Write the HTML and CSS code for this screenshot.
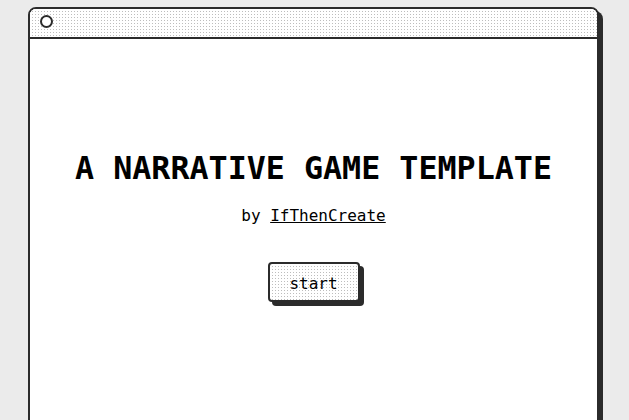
FILE: index.html
```html
<!DOCTYPE html>
<html>
<head>
<meta charset="utf-8">
<link rel="stylesheet" href="styles.css">
</head>
<body>
<div class="window">
  <div class="titlebar"><span class="dot-btn"></span></div>
  <div class="content">
    <h1 class="title">A NARRATIVE GAME TEMPLATE</h1>
    <p class="byline">by <a class="author" href="#">IfThenCreate</a></p>
    <button class="start">start</button>
  </div>
</div>
</body>
</html>
```
FILE: styles.css
```css
html, body {
  margin: 0;
  padding: 0;
}
body {
  background: #ebebeb;
  font-family: "DejaVu Sans Mono", "Liberation Mono", monospace;
  color: #000;
  overflow: hidden;
  height: 420px;
}
.window {
  box-sizing: border-box;
  margin: 7px 0 0 28px;
  width: 571px;
  height: 520px;
  background: #fff;
  border: 2px solid #2b2b2b;
  border-radius: 8px 8px 0 0;
  box-shadow: 4px 4px 0 #2b2b2b;
}
.titlebar {
  height: 28px;
  border-bottom: 2px solid #2b2b2b;
  border-radius: 6px 6px 0 0;
  background-color: #bdbdbd;
  background-image:
    linear-gradient(to right, #fff 2px, transparent 2px),
    linear-gradient(to bottom, #fff 2px, transparent 2px);
  background-size: 3px 3px;
  display: flex;
  align-items: flex-start;
}
.dot-btn {
  box-sizing: border-box;
  width: 13px;
  height: 13px;
  margin: 6px 0 0 10px;
  border: 2px solid #2b2b2b;
  border-radius: 50%;
  background: #fff;
}
.content {
  display: flex;
  flex-direction: column;
  align-items: center;
  padding-top: 114px;
}
.title {
  margin: 0;
  font-size: 31.7px;
  line-height: 1;
  font-weight: bold;
  letter-spacing: 0;
}
.byline {
  margin: 23.5px 0 0;
  font-size: 16px;
  line-height: 16px;
}
.author {
  color: #000;
  text-decoration: underline;
}
.start {
  box-sizing: border-box;
  margin-top: 37.5px;
  width: 92px;
  height: 40px;
  padding: 4px 0 0;
  font-family: "DejaVu Sans Mono", "Liberation Mono", monospace;
  font-size: 16px;
  line-height: 16px;
  color: #000;
  border: 2px solid #2b2b2b;
  border-radius: 4px;
  box-shadow: 4px 4px 0 #2b2b2b;
  background-color: #bdbdbd;
  background-image:
    linear-gradient(to right, #fff 2px, transparent 2px),
    linear-gradient(to bottom, #fff 2px, transparent 2px);
  background-size: 3px 3px;
}
```
